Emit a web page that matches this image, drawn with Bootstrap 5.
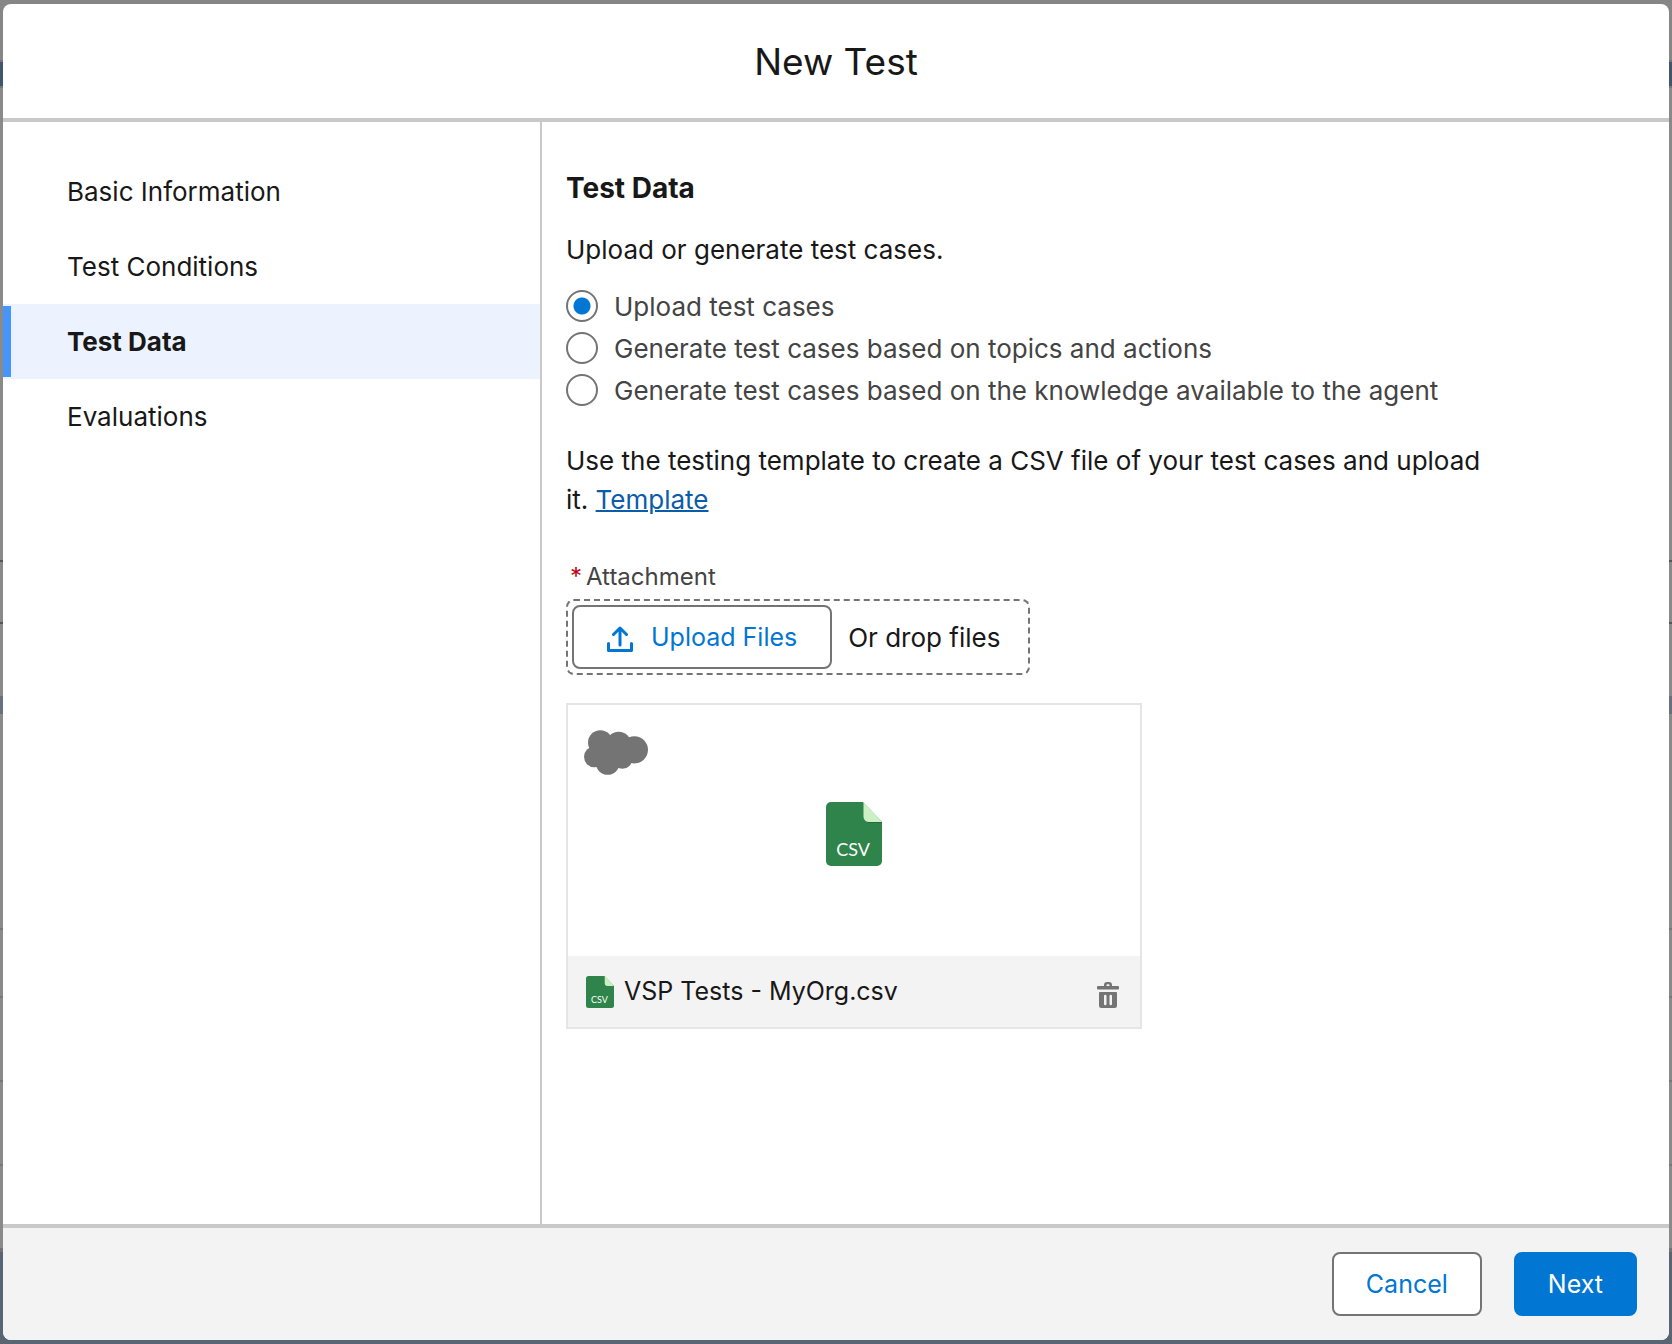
<!DOCTYPE html>
<html lang="en">
<head>
<meta charset="utf-8">
<meta name="viewport" content="width=device-width, initial-scale=1">
<title>New Test</title>
<link href="https://cdn.jsdelivr.net/npm/bootstrap@5.3.0/dist/css/bootstrap.min.css" rel="stylesheet">
<style>
  :root { --ink: #181818; --soft: #444; --line: #747474; --rule: #c9c9c9; --brand: #0176d3; --panel: #f3f3f3; }
  body {
    font-family: Inter, "Liberation Sans", sans-serif; font-size: 26px; line-height: 39px; color: var(--ink);
    padding: 4px 3px;
    /* dimmed application behind the dialog */
    background: linear-gradient(#868686 0 60px, #777 60px 62px, #40566f 62px 86px, #777 86px 88px, #8a8a8a 88px 560px, #555 560px 562px, #8a8a8a 562px 622px, #555 622px 624px, #8a8a8a 624px 696px, #68727e 696px 714px, #8a8a8a 714px 928px, #777 928px 930px, #8a8a8a 930px 996px, #777 996px 998px, #8a8a8a 998px 1080px, #777 1080px 1082px, #8a8a8a 1082px 1164px, #777 1164px 1166px, #8a8a8a 1166px 1248px, #737373 1248px 1252px, #596572 1252px);
  }
  .dialog { border-radius: 8px; overflow: hidden; }
  .dialog-head { height: 118px; border-bottom: 4px solid var(--rule); padding-top: 2px; }
  .dialog-head h1 { font-size: 37px; line-height: 48px; font-weight: 400; }
  .steps { width: 539px; border-right: 2px solid var(--rule); padding-top: 32px; }
  .steps .nav-link { color: var(--ink); height: 75px; padding: 0 64px; display: flex; align-items: center; position: relative; }
  .steps .nav-link.active { background: #ecf3fe; font-weight: 700; }
  .steps .nav-link.active::before { content: ""; position: absolute; left: 0; top: 2px; bottom: 2px; width: 8px; background: #4596fb; }
  .pane { padding: 48px 24px; }
  .pane h2 { font-size: 28px; line-height: 36px; font-weight: 700; margin-bottom: 24px; }
  .pane p { max-width: 936px; }
  .choice { height: 42px; gap: 16px; color: var(--soft); }
  .choice .form-check-input { width: 32px; height: 32px; margin: 0; border: 2px solid var(--line); flex: none; }
  .choice .form-check-input:checked { background: #fff radial-gradient(circle, var(--brand) 0 8px, transparent 9px); }
  .note { padding: 30px 0 40px; }
  .note a { color: #0b5cab; text-decoration-thickness: 2px; }
  .field-label { font-size: 24px; line-height: 36px; color: var(--soft); padding-left: 4px; margin-bottom: 4px; }
  .field-label abbr { color: #ba0517; text-decoration: none; cursor: default; margin-right: 4px; }
  .drop { height: 76px; padding: 4px; border: 2px dashed var(--line); border-radius: 8px; margin-bottom: 28px; }
  .drop > span { padding: 0 24px 0 16px; }
  .btn { --bs-btn-font-size: 25px; --bs-btn-line-height: 36px; --bs-btn-border-radius: 8px; --bs-btn-border-width: 2px; --bs-btn-padding-y: 12px; --bs-btn-padding-x: 32px; }
  .drop .btn { --bs-btn-padding-x: 33px; }
  .btn .upload-icon { margin: 4px 18px 0 0; }
  .btn-plain { --bs-btn-bg: #fff; --bs-btn-color: var(--brand); --bs-btn-border-color: var(--line); --bs-btn-hover-color: #014486; --bs-btn-hover-bg: #f3f3f3; --bs-btn-hover-border-color: var(--line); }
  .btn-brand { --bs-btn-bg: var(--brand); --bs-btn-color: #fff; --bs-btn-border-color: var(--brand); --bs-btn-hover-color: #fff; --bs-btn-hover-bg: #014486; }
  .file-card { max-width: 576px; border: 2px solid #e5e5e5; }
  .preview { height: 251px; padding-top: 6px; position: relative; }
  .cloud { position: absolute; left: 16px; top: 25px; }
  .file-foot { background: var(--panel); height: 71px; padding: 0 20px 0 18px; gap: 10px; font-size: 25px; }
  .dialog-foot { background: var(--panel); border-top: 4px solid var(--rule); padding: 24px 32px; gap: 32px; }
  .icon-button { border: 0; background: none; padding: 6px 1px 0 0; line-height: 1; }
  svg { display: block; flex: none; }
  svg text { font-family: Lato, sans-serif; font-weight: 400; fill: #fff; }
</style>
<script src="https://cdn.jsdelivr.net/npm/bootstrap@5.3.0/dist/js/bootstrap.bundle.min.js"></script>
</head>
<body class="min-vh-100 d-flex flex-column">
<main class="dialog bg-white d-flex flex-column flex-grow-1" role="dialog" aria-labelledby="title">
  <header class="dialog-head d-flex align-items-center justify-content-center">
    <h1 id="title" class="m-0">New Test</h1>
  </header>

  <div class="d-flex flex-grow-1">
    <nav class="steps nav flex-column flex-nowrap flex-shrink-0" aria-label="Steps">
      <a class="nav-link" href="#">Basic Information</a>
      <a class="nav-link" href="#">Test Conditions</a>
      <a class="nav-link active" aria-current="step" href="#">Test Data</a>
      <a class="nav-link" href="#">Evaluations</a>
    </nav>

    <section class="pane flex-grow-1">
      <h2>Test Data</h2>
      <p class="mb-3">Upload or generate test cases.</p>
      <div class="choice d-flex align-items-center">
        <input class="form-check-input" type="radio" name="source" id="s1" checked><label for="s1">Upload test cases</label>
      </div>
      <div class="choice d-flex align-items-center">
        <input class="form-check-input" type="radio" name="source" id="s2"><label for="s2">Generate test cases based on topics and actions</label>
      </div>
      <div class="choice d-flex align-items-center">
        <input class="form-check-input" type="radio" name="source" id="s3"><label for="s3">Generate test cases based on the knowledge available to the agent</label>
      </div>
      <p class="note m-0">Use the testing template to create a CSV file of your test cases and upload it. <a href="#">Template</a></p>

      <label class="field-label d-block" for="upload"><abbr title="required">*</abbr>Attachment</label>
      <div class="drop d-inline-flex align-items-center">
        <button type="button" id="upload" class="btn btn-plain d-flex align-items-center">
          <svg class="upload-icon" width="26" height="26" viewBox="0 0 26 26" fill="none" stroke="currentColor" stroke-width="3" stroke-linecap="round" stroke-linejoin="round"><path d="M13 19V2.500M6.500 8.500 13 2l6.500 6.500M1.500 17.500v7h23v-7"/></svg>
          Upload Files
        </button>
        <span>Or drop files</span>
      </div>

      <div class="file-card">
        <div class="preview d-flex align-items-center justify-content-center">
          <svg class="cloud" width="64" height="45" viewBox="102 542 192 134" fill="#747474"><circle cx="151" cy="579" r="37"/><circle cx="206" cy="585" r="38"/><circle cx="253" cy="601" r="41"/><circle cx="133" cy="622" r="31"/><circle cx="173" cy="641" r="35"/><circle cx="217" cy="628" r="30"/><path d="M130 590h100v45H140z"/></svg>
          <svg width="56" height="64" viewBox="0 0 56 64"><path fill="#2e844a" d="M5 0h32l19 20v39a5 5 0 0 1-5 5H5a5 5 0 0 1-5-5V5a5 5 0 0 1 5-5z"/><path fill="#236b3b" d="M38 17l4 4h14v-1z"/><path fill="#cdefc4" d="M37.500 0 56 20H43a5.500 5.500 0 0 1-5.500-5.500z"/><text x="27" y="54" font-size="18" text-anchor="middle">CSV</text></svg>
        </div>
        <div class="file-foot d-flex align-items-center">
          <svg width="28" height="32" viewBox="0 0 56 64"><path fill="#2e844a" d="M5 0h32l19 20v39a5 5 0 0 1-5 5H5a5 5 0 0 1-5-5V5a5 5 0 0 1 5-5z"/><path fill="#cdefc4" d="M37.500 0 56 20H43a5.500 5.500 0 0 1-5.500-5.500z"/><text x="27" y="54" font-size="18" text-anchor="middle">CSV</text></svg>
          <span class="flex-grow-1">VSP Tests - MyOrg.csv</span>
          <button type="button" class="icon-button" aria-label="Delete file">
            <svg width="22" height="26" viewBox="0 0 22 26" fill="#747474"><path fill-rule="evenodd" d="M1 4h6V3a3 3 0 0 1 3-3h2a3 3 0 0 1 3 3v1h6a1 1 0 0 1 1 1v1.500a1 1 0 0 1-1 1H1a1 1 0 0 1-1-1V5a1 1 0 0 1 1-1zM9.500 4h3V3a.8.8 0 0 0-.8-.8h-1.400a.8.8 0 0 0-.8.8zM3 10h16a1 1 0 0 1 1 1v12.500a2.500 2.500 0 0 1-2.500 2.500h-13A2.500 2.500 0 0 1 2 23.500V11a1 1 0 0 1 1-1zM7 14v8a1 1 0 0 0 2.500 0v-8A1 1 0 0 0 7 14zM12.500 14v8a1 1 0 0 0 2.500 0v-8a1 1 0 0 0-2.500 0z"/></svg>
          </button>
        </div>
      </div>
    </section>
  </div>

  <footer class="dialog-foot d-flex justify-content-end">
    <button type="button" class="btn btn-plain">Cancel</button>
    <button type="button" class="btn btn-brand">Next</button>
  </footer>
</main>
</body>
</html>
